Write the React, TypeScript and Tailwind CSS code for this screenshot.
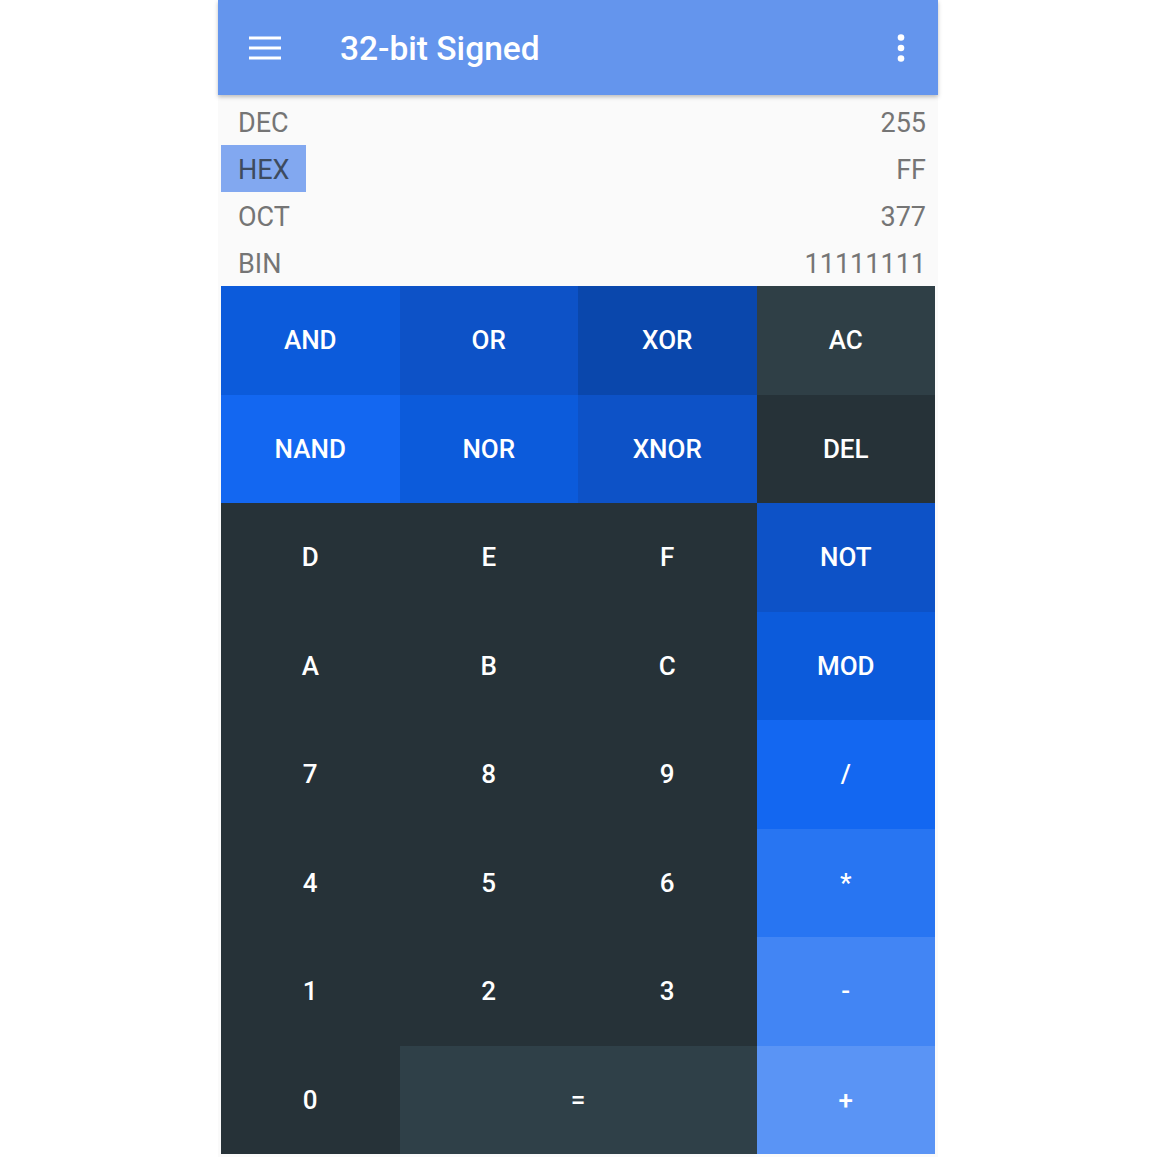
type Key = {
  label: string;
  bg: string;
  span?: boolean;
};

const keys: Key[] = [
  { label: "AND", bg: "bg-[#0c5bdb]" },
  { label: "OR", bg: "bg-[#0d52c7]" },
  { label: "XOR", bg: "bg-[#0a47ac]" },
  { label: "AC", bg: "bg-[#2f3f46]" },
  { label: "NAND", bg: "bg-[#1367f1]" },
  { label: "NOR", bg: "bg-[#0c5bdb]" },
  { label: "XNOR", bg: "bg-[#0d52c7]" },
  { label: "DEL", bg: "bg-[#263238]" },
  { label: "D", bg: "bg-[#263238]" },
  { label: "E", bg: "bg-[#263238]" },
  { label: "F", bg: "bg-[#263238]" },
  { label: "NOT", bg: "bg-[#0d52c7]" },
  { label: "A", bg: "bg-[#263238]" },
  { label: "B", bg: "bg-[#263238]" },
  { label: "C", bg: "bg-[#263238]" },
  { label: "MOD", bg: "bg-[#0c5bdb]" },
  { label: "7", bg: "bg-[#263238]" },
  { label: "8", bg: "bg-[#263238]" },
  { label: "9", bg: "bg-[#263238]" },
  { label: "/", bg: "bg-[#1367f1]" },
  { label: "4", bg: "bg-[#263238]" },
  { label: "5", bg: "bg-[#263238]" },
  { label: "6", bg: "bg-[#263238]" },
  { label: "*", bg: "bg-[#2875f2]" },
  { label: "1", bg: "bg-[#263238]" },
  { label: "2", bg: "bg-[#263238]" },
  { label: "3", bg: "bg-[#263238]" },
  { label: "-", bg: "bg-[#4285f4]" },
  { label: "0", bg: "bg-[#263238]" },
  { label: "=", bg: "bg-[#2f4048]", span: true },
  { label: "+", bg: "bg-[#5a94f5]" },
];

const bases = [
  { name: "DEC", value: "255" },
  { name: "HEX", value: "FF", active: true },
  { name: "OCT", value: "377" },
  { name: "BIN", value: "11111111" },
];

export default function App() {
  return (
    <div className="min-h-[1157px] bg-white font-['Roboto',sans-serif]">
      <div className="ml-[218px] w-[720px] bg-[#fafafa] pb-[3px]">
        <header className="relative z-10 flex h-[95px] items-center bg-[#6495ed] shadow-[0_2px_4px_rgba(0,0,0,0.25)]">
          <button type="button" className="ml-[31px] flex items-center">
            <svg width="32" height="24" viewBox="0 0 32 24" aria-hidden="true">
              <rect x="0" y="0.5" width="32" height="3" fill="white" />
              <rect x="0" y="10.5" width="32" height="3" fill="white" />
              <rect x="0" y="20.5" width="32" height="3" fill="white" />
            </svg>
          </button>
          <h1 className="ml-[59px] pt-[3px] text-[33.5px] font-medium text-white">
            32-bit Signed
          </h1>
          <button type="button" className="ml-auto mr-[33px] flex items-center">
            <svg width="8" height="28" viewBox="0 0 8 28" aria-hidden="true">
              <circle cx="4" cy="3.5" r="3.3" fill="white" />
              <circle cx="4" cy="14" r="3.3" fill="white" />
              <circle cx="4" cy="24.5" r="3.3" fill="white" />
            </svg>
          </button>
        </header>

        <section className="mx-[3px] pt-[3px]">
          {bases.map((base) => (
            <div
              key={base.name}
              className="flex h-[47px] items-center justify-between text-[27px] text-[#757575]"
            >
              <span
                className={`flex h-full w-[85px] items-center pl-[17px] pt-[4px] ${
                  base.active ? "bg-[#82a8f0] text-[#3d4b5f]" : ""
                }`}
              >
                {base.name}
              </span>
              <span className="pr-[9px] pt-[4px]">{base.value}</span>
            </div>
          ))}
        </section>

        <div className="mx-[3px] grid grid-cols-4">
          {keys.map((key) => (
            <button
              key={key.label}
              type="button"
              className={`flex h-[108.5px] items-center justify-center pt-[1px] text-[26px] font-medium text-white ${key.bg} ${
                key.span ? "col-span-2" : ""
              }`}
            >
              {key.label}
            </button>
          ))}
        </div>
      </div>
    </div>
  );
}
